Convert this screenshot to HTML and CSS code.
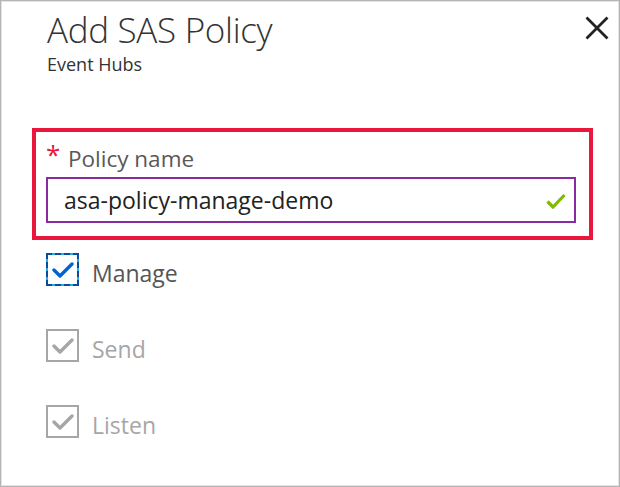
FILE: index.html
```html
<!DOCTYPE html>
<html lang="en">
<head>
<meta charset="utf-8">
<title>Add SAS Policy</title>
<link rel="stylesheet" href="styles.css">
</head>
<body>
<div class="panel">
  <header class="header">
    <div class="titles">
      <h1 class="title">Add SAS Policy</h1>
      <div class="subtitle">Event Hubs</div>
    </div>
    <button class="close" aria-label="Close">
      <svg width="24" height="24" viewBox="0 0 24 24"><path d="M1.5 1.5 L22.5 22.5 M22.5 1.5 L1.5 22.5" stroke="#222" stroke-width="2.8" fill="none"/></svg>
    </button>
  </header>

  <section class="field-box">
    <div class="label-row">
      <span class="req">*</span>
      <span class="label">Policy name</span>
    </div>
    <div class="input">
      <span class="input-text">asa-policy-manage-demo</span>
      <svg class="valid" width="20" height="16" viewBox="0 0 20 16"><path d="M1.5 8.5 L7 14 L18.5 2" stroke="#7fba00" stroke-width="3.2" fill="none"/></svg>
    </div>
  </section>

  <div class="checks">
    <label class="check">
      <span class="box focus">
        <svg width="22" height="18" viewBox="0 0 22 18"><path d="M2 9 L8 15 L20 3" stroke="#0063d1" stroke-width="3.4" fill="none" stroke-linejoin="round" stroke-linecap="round"/></svg>
      </span>
      <span class="check-label">Manage</span>
    </label>
    <label class="check disabled">
      <span class="box">
        <svg width="22" height="18" viewBox="0 0 22 18"><path d="M2 9 L8 15 L20 3" stroke="#a6a6a6" stroke-width="3.4" fill="none" stroke-linejoin="round" stroke-linecap="round"/></svg>
      </span>
      <span class="check-label">Send</span>
    </label>
    <label class="check disabled">
      <span class="box">
        <svg width="22" height="18" viewBox="0 0 22 18"><path d="M2 9 L8 15 L20 3" stroke="#a6a6a6" stroke-width="3.4" fill="none" stroke-linejoin="round" stroke-linecap="round"/></svg>
      </span>
      <span class="check-label">Listen</span>
    </label>
  </div>
</div>
</body>
</html>
```

FILE: styles.css
```css
html, body {
  margin: 0;
  padding: 0;
  background: #fff;
}

.panel {
  box-sizing: border-box;
  width: 620px;
  height: 487px;
  border: 1px solid #b4b4b4;
  box-shadow: inset 0 0 0 1px #e4e4e4;
  font-family: "Open Sans", "Noto Sans", sans-serif;
  display: flex;
  flex-direction: column;
}

.header {
  display: flex;
  justify-content: space-between;
  align-items: flex-start;
  padding: 0 10px 0 46px;
}

.title {
  margin: 0;
  padding-top: 7px;
  font-size: 35px;
  font-weight: 300;
  line-height: 44px;
  color: #333;
  letter-spacing: -0.3px;
}

.subtitle {
  margin-top: 1px;
  font-size: 18px;
  line-height: 22px;
  color: #333;
}

.close {
  margin-top: 15px;
  padding: 0;
  border: 0;
  background: none;
  width: 24px;
  height: 24px;
  display: flex;
}

.field-box {
  margin: 53px 0 0 31px;
  width: 561px;
  height: 112px;
  box-sizing: border-box;
  border: 4px solid #e8173b;
  padding: 8px 13px 0 10px;
}

.label-row {
  display: flex;
  align-items: flex-start;
  height: 37px;
}

.req {
  color: #e8173b;
  font-size: 26px;
  line-height: 26px;
  width: 22px;
  font-weight: 400;
  margin-top: 1px;
}

.label {
  font-size: 22.5px;
  line-height: 28px;
  color: #595959;
  margin-top: 5px;
}

.input {
  height: 46px;
  box-sizing: border-box;
  border: 2px solid #8a2aa0;
  display: flex;
  align-items: center;
  justify-content: space-between;
  padding: 0 8px 0 16px;
}

.input-text {
  font-size: 23px;
  color: #222;
  margin-top: -1px;
}

.valid {
  margin-top: 2px;
}

.checks {
  display: flex;
  flex-direction: column;
  gap: 43px;
  padding: 13px 0 0 45px;
}

.check {
  display: flex;
  align-items: center;
  height: 33px;
}

.box {
  box-sizing: border-box;
  width: 33px;
  height: 33px;
  border: 2px solid #a6a6a6;
  display: flex;
  align-items: center;
  justify-content: center;
}

.box.focus {
  border: 2px solid #19b0ea;
  outline: 2px dashed #0d4a9c;
  outline-offset: -2px;
}

.check-label {
  margin-left: 13px;
  margin-top: 6px;
  font-size: 23px;
  color: #555;
}

.check.disabled .check-label {
  color: #a6a6a6;
}
```
